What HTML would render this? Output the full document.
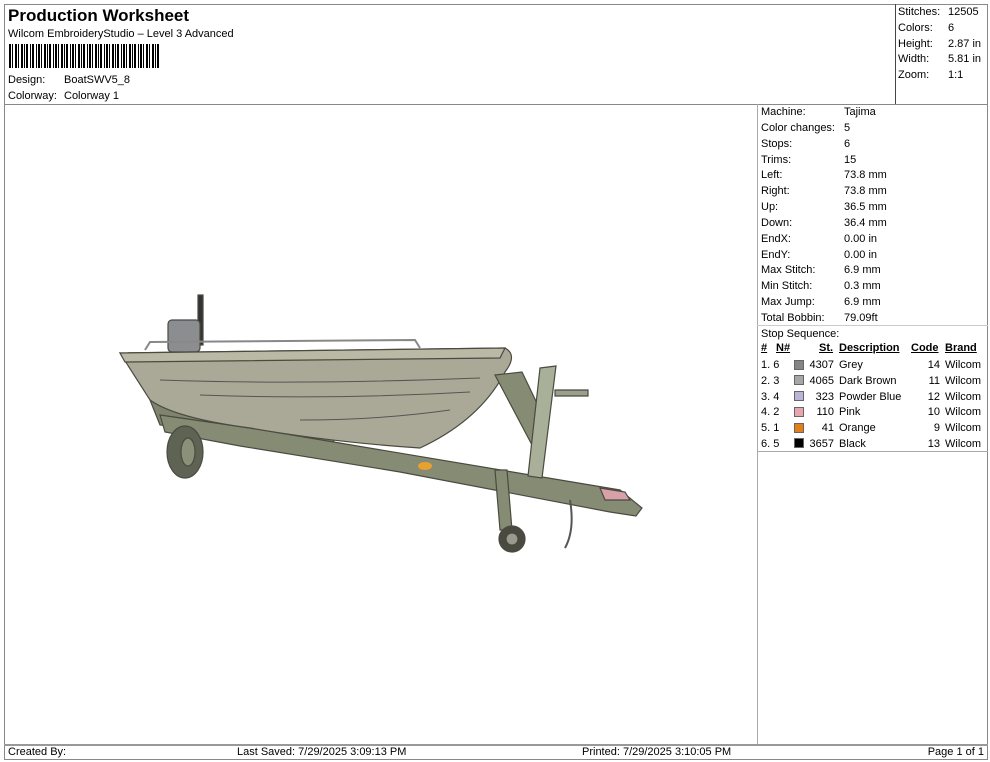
<!DOCTYPE html>
<html><head><style>
*{margin:0;padding:0;box-sizing:border-box}
body{width:990px;height:762px;background:#fff;font-family:"Liberation Sans",Arial,sans-serif;font-size:11px;color:#000;position:relative;overflow:hidden}
.a{position:absolute;white-space:nowrap}
.l{position:absolute;background:#888}
u{text-decoration:underline}
.sw{position:absolute;width:10px;height:10px;border:1px solid #666}
</style></head><body>
<div class="l" style="left:4px;top:4px;width:984px;height:1px"></div>
<div class="l" style="left:4px;top:4px;width:1px;height:756px"></div>
<div class="l" style="left:987px;top:4px;width:1px;height:756px"></div>
<div class="l" style="left:4px;top:104px;width:984px;height:1px"></div>
<div class="l" style="left:895px;top:4px;width:1px;height:100px;background:#444"></div>
<div class="l" style="left:757px;top:104px;width:1px;height:641px;background:#aaa"></div>
<div class="l" style="left:757px;top:325px;width:231px;height:1px;background:#ccc"></div>
<div class="l" style="left:757px;top:451px;width:231px;height:1px;background:#aaa"></div>
<div class="l" style="left:4px;top:744px;width:984px;height:2px;background:#999"></div>
<div class="l" style="left:4px;top:759px;width:984px;height:1px"></div>

<div class="a" style="left:8px;top:6px;font-size:17px;font-weight:bold">Production Worksheet</div>
<div class="a" style="left:8px;top:28px">Wilcom EmbroideryStudio – Level 3 Advanced</div>
<svg class="a" style="left:9px;top:44px" width="150" height="24">
<g fill="#000">
<rect x="0" width="2" height="24"/><rect x="3" width="1" height="24"/><rect x="6" width="2" height="24"/><rect x="9" width="1" height="24"/><rect x="12" width="2" height="24"/><rect x="15" width="1" height="24"/><rect x="17" width="2" height="24"/><rect x="21" width="1" height="24"/><rect x="23" width="2" height="24"/><rect x="27" width="1" height="24"/><rect x="29" width="2" height="24"/><rect x="32" width="1" height="24"/><rect x="35" width="2" height="24"/><rect x="38" width="1" height="24"/><rect x="40" width="2" height="24"/><rect x="44" width="1" height="24"/><rect x="46" width="2" height="24"/><rect x="49" width="1" height="24"/><rect x="52" width="2" height="24"/><rect x="55" width="1" height="24"/><rect x="57" width="2" height="24"/><rect x="61" width="1" height="24"/><rect x="63" width="2" height="24"/><rect x="66" width="1" height="24"/><rect x="69" width="2" height="24"/><rect x="72" width="1" height="24"/><rect x="74" width="2" height="24"/><rect x="78" width="1" height="24"/><rect x="80" width="2" height="24"/><rect x="83" width="1" height="24"/><rect x="86" width="2" height="24"/><rect x="89" width="1" height="24"/><rect x="91" width="2" height="24"/><rect x="95" width="1" height="24"/><rect x="97" width="2" height="24"/><rect x="100" width="1" height="24"/><rect x="103" width="2" height="24"/><rect x="106" width="1" height="24"/><rect x="108" width="2" height="24"/><rect x="112" width="1" height="24"/><rect x="114" width="2" height="24"/><rect x="117" width="1" height="24"/><rect x="120" width="2" height="24"/><rect x="123" width="1" height="24"/><rect x="125" width="2" height="24"/><rect x="129" width="1" height="24"/><rect x="131" width="2" height="24"/><rect x="134" width="1" height="24"/><rect x="137" width="2" height="24"/><rect x="140" width="1" height="24"/><rect x="143" width="2" height="24"/><rect x="146" width="1" height="24"/><rect x="148" width="2" height="24"/>
</g></svg>
<div class="a" style="left:8px;top:74px">Design:</div><div class="a" style="left:64px;top:74px">BoatSWV5_8</div>
<div class="a" style="left:8px;top:90px">Colorway:</div><div class="a" style="left:64px;top:90px">Colorway 1</div>

<div class="a" style="left:898px;top:5px;line-height:15.8px">Stitches:<br>Colors:<br>Height:<br>Width:<br>Zoom:</div>
<div class="a" style="left:948px;top:5px;line-height:15.8px">12505<br>6<br>2.87 in<br>5.81 in<br>1:1</div>

<div class="a" style="left:761px;top:105px;line-height:15.85px">Machine:<br>Color changes:<br>Stops:<br>Trims:<br>Left:<br>Right:<br>Up:<br>Down:<br>EndX:<br>EndY:<br>Max Stitch:<br>Min Stitch:<br>Max Jump:<br>Total Bobbin:<br>Stop Sequence:</div>
<div class="a" style="left:844px;top:105px;line-height:15.85px">Tajima<br>5<br>6<br>15<br>73.8 mm<br>73.8 mm<br>36.5 mm<br>36.4 mm<br>0.00 in<br>0.00 in<br>6.9 mm<br>0.3 mm<br>6.9 mm<br>79.09ft</div>

<div class="a" style="left:761px;top:342px;font-weight:bold"><u>#</u></div>
<div class="a" style="left:776px;top:342px;font-weight:bold"><u>N#</u></div>
<div class="a" style="left:819px;top:342px;font-weight:bold"><u>St.</u></div>
<div class="a" style="left:839px;top:342px;font-weight:bold"><u>Description</u></div>
<div class="a" style="left:911px;top:342px;font-weight:bold"><u>Code</u></div>
<div class="a" style="left:945px;top:342px;font-weight:bold"><u>Brand</u></div>
<div class="a" style="left:761px;top:358px;line-height:15.8px">1. 6<br>2. 3<br>3. 4<br>4. 2<br>5. 1<br>6. 5</div>
<div class="a" style="left:804px;top:358px;line-height:15.8px;text-align:right;width:30px">4307<br>4065<br>323<br>110<br>41<br>3657</div>
<div class="a" style="left:839px;top:358px;line-height:15.8px">Grey<br>Dark Brown<br>Powder Blue<br>Pink<br>Orange<br>Black</div>
<div class="a" style="left:920px;top:358px;line-height:15.8px;text-align:right;width:20px">14<br>11<br>12<br>10<br>9<br>13</div>
<div class="a" style="left:945px;top:358px;line-height:15.8px">Wilcom<br>Wilcom<br>Wilcom<br>Wilcom<br>Wilcom<br>Wilcom</div>
<div class="sw" style="left:794px;top:360px;background:#858585"></div>
<div class="sw" style="left:794px;top:375px;background:#a6a6a6"></div>
<div class="sw" style="left:794px;top:391px;background:#b8b5d6"></div>
<div class="sw" style="left:794px;top:407px;background:#e8a5b0"></div>
<div class="sw" style="left:794px;top:423px;background:#e37f1a"></div>
<div class="sw" style="left:794px;top:438px;background:#000"></div>

<svg class="a" style="left:0;top:0" width="757" height="744">
<g stroke="#4a4a40" stroke-width="1.2">
<polygon points="150,400 330,430 335,445 160,425" fill="#7f8470"/>
<polygon points="160,415 250,428 620,490 642,508 636,516 610,512 400,472 240,446 165,432" fill="#868b74"/>
<ellipse cx="185" cy="452" rx="18" ry="26" fill="#5e6354"/>
<ellipse cx="188" cy="452" rx="7" ry="14" fill="#8b9078"/>
<polygon points="495,470 507,470 512,530 500,530" fill="#868b74"/>
<circle cx="512" cy="539" r="13" fill="#4a4a40"/><circle cx="512" cy="539" r="6" fill="#9a9a90"/>
<rect x="198" y="295" width="5" height="50" fill="#333"/>
<rect x="168" y="320" width="32" height="32" rx="4" fill="#8c8d90"/>
<path d="M120,353 L505,348 Q518,355 505,372 Q480,420 420,448 Q330,442 250,428 Q175,418 150,400 Z" fill="#aaa997"/>
<path d="M120,353 L505,348 L500,358 L125,362 Z" fill="#bab9a6"/>
<path d="M160,380 Q300,385 480,378 M200,395 Q330,400 470,392 M300,420 Q380,420 450,410" fill="none" stroke="#555" stroke-width="1"/>
<path d="M145,350 L150,342 L415,340 L420,348" fill="none" stroke="#888" stroke-width="2"/>
<polygon points="495,375 522,372 545,420 532,445" fill="#868b74"/>
<polygon points="540,368 556,366 542,478 528,476" fill="#a8b09a"/>
<polygon points="555,390 588,390 588,396 555,396" fill="#9a9e8a"/>
<ellipse cx="425" cy="466" rx="7" ry="4" fill="#e8a030" stroke="none"/>
<polygon points="600,488 625,492 630,500 605,500" fill="#d8a0a8"/>
<path d="M570,500 Q575,530 565,548" fill="none" stroke="#555" stroke-width="2"/>
</g>
</svg>

<div class="a" style="left:8px;top:746px">Created By:</div>
<div class="a" style="left:237px;top:746px">Last Saved: 7/29/2025 3:09:13 PM</div>
<div class="a" style="left:582px;top:746px">Printed: 7/29/2025 3:10:05 PM</div>
<div class="a" style="right:6px;top:746px">Page 1 of 1</div>
</body></html>
